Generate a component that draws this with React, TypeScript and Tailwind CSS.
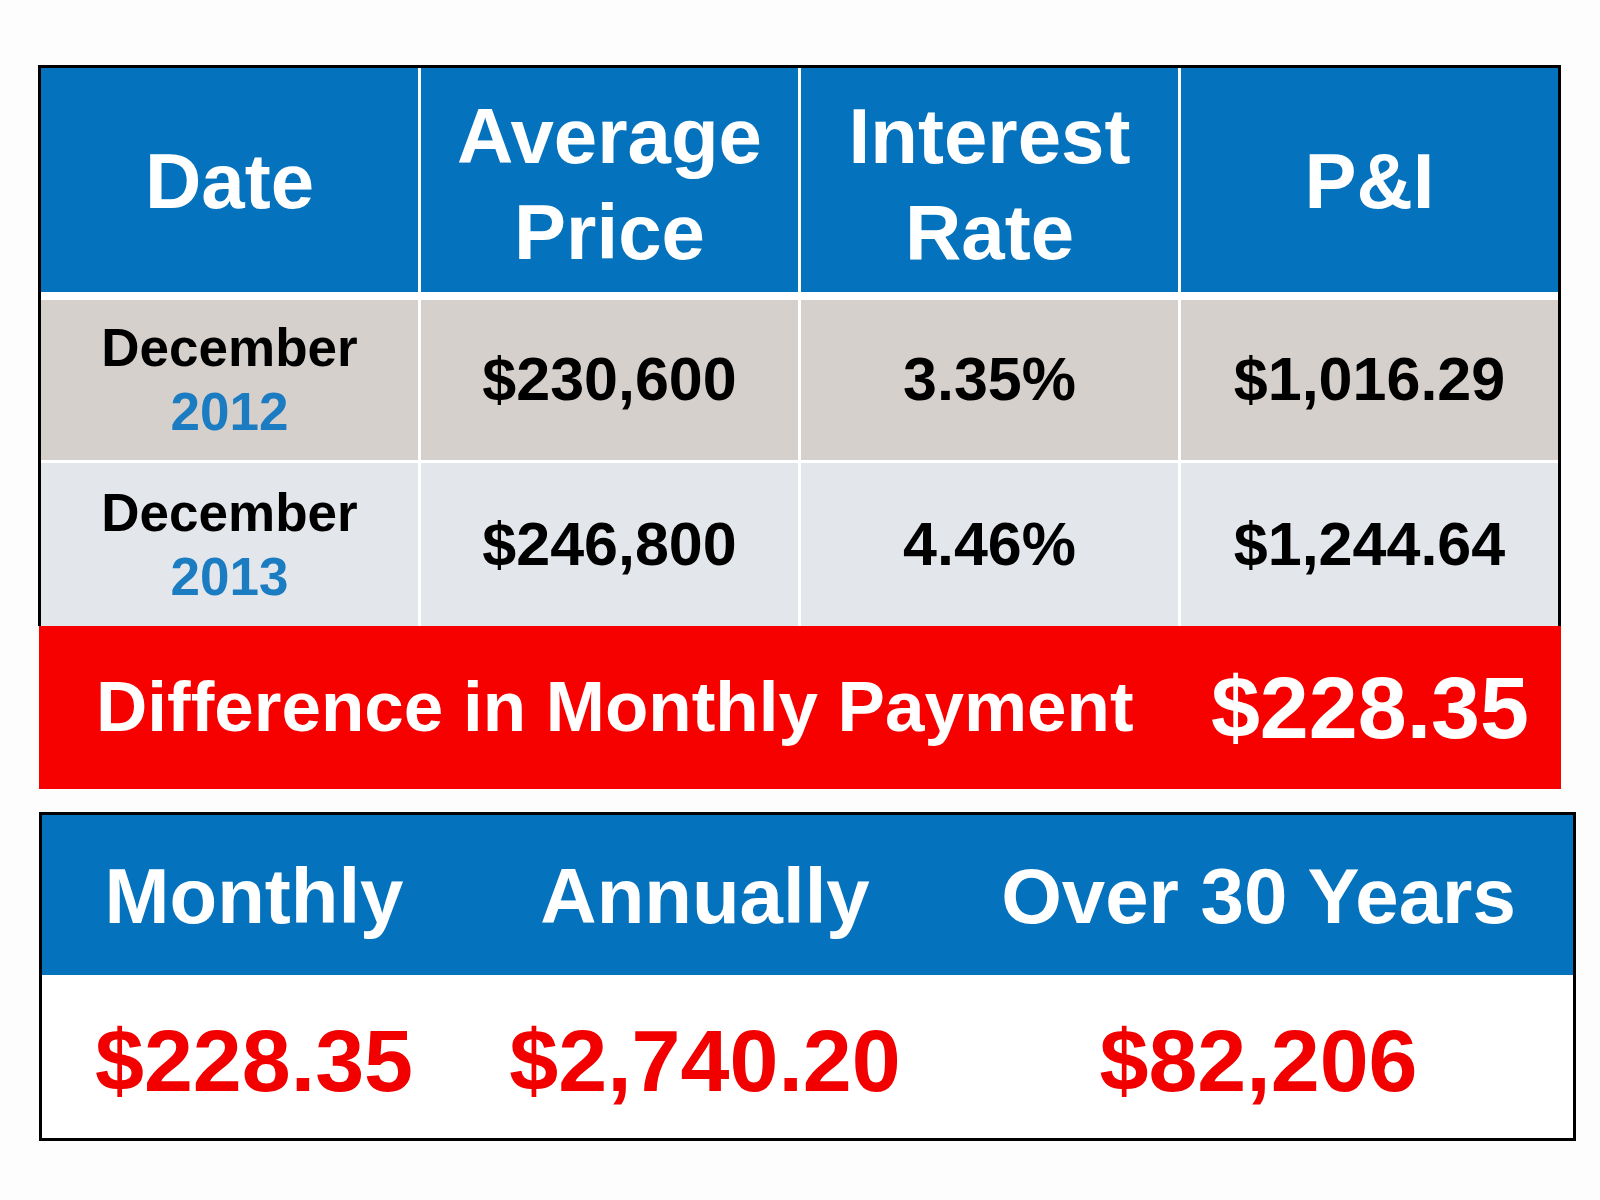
const font = { fontFamily: '"Liberation Sans", Arial, sans-serif' };

const headers = [['Date'], ['Average', 'Price'], ['Interest', 'Rate'], ['P&I']];

const rows = [
  { month: 'December', year: '2012', price: '$230,600', rate: '3.35%', pi: '$1,016.29', bg: 'bg-[#d5d0cc]' },
  { month: 'December', year: '2013', price: '$246,800', rate: '4.46%', pi: '$1,244.64', bg: 'bg-[#e3e7ec]' },
];

const totals = [
  { label: 'Monthly', value: '$228.35' },
  { label: 'Annually', value: '$2,740.20' },
  { label: 'Over 30 Years', value: '$82,206' },
];

export default function App() {
  return (
    <div className="w-[1600px] h-[1200px] bg-[#fdfdfd] pt-[65px] pl-[38px] font-bold" style={font}>
      <div className="w-[1523px]">
        <div className="border-x-[3px] border-t-[3px] border-black bg-white">
          <div className="grid grid-cols-4 gap-x-[3px]">
            {headers.map((lines, i) => (
              <div
                key={i}
                className={`h-[224px] bg-[#0572bd] flex flex-col items-center justify-center text-white text-[78px] leading-[96px] ${lines.length > 1 ? 'pt-[8px]' : 'pt-[2px]'}`}
              >
                {lines.map((l) => (
                  <span key={l}>{l}</span>
                ))}
              </div>
            ))}
          </div>
          {rows.map((r, i) => (
            <div key={r.year} className={`grid grid-cols-4 gap-x-[3px] ${i === 0 ? 'mt-[8px] h-[160px]' : 'mt-[3px] h-[163px]'}`}>
              <div className={`${r.bg} flex flex-col items-center justify-center text-[53px] leading-[64px]`}>
                <span className="text-black">{r.month}</span>
                <span className="text-[#1b7cc1]">{r.year}</span>
              </div>
              {[r.price, r.rate, r.pi].map((v) => (
                <div key={v} className={`${r.bg} flex items-center justify-center text-black text-[61px]`}>
                  {v}
                </div>
              ))}
            </div>
          ))}
        </div>
        <div className="ml-[1px] h-[163px] bg-[#f70000] flex items-center justify-between pl-[57px] pr-[32px] text-white">
          <span className="text-[71px]">Difference in Monthly Payment</span>
          <span className="text-[88px]">$228.35</span>
        </div>
      </div>
      <div className="mt-[23px] ml-[1px] w-[1537px] border-[3px] border-black bg-white">
        <div className="grid grid-cols-[424px_478px_1fr] h-[160px] bg-[#0572bd] text-white text-[78px]">
          {totals.map((t) => (
            <div key={t.label} className="flex items-center justify-center pt-[2px]">
              {t.label}
            </div>
          ))}
        </div>
        <div className="grid grid-cols-[424px_478px_1fr] h-[163px] text-[#f20000] text-[88px]">
          {totals.map((t) => (
            <div key={t.label} className="flex items-center justify-center pt-[8px]">
              {t.value}
            </div>
          ))}
        </div>
      </div>
    </div>
  );
}
